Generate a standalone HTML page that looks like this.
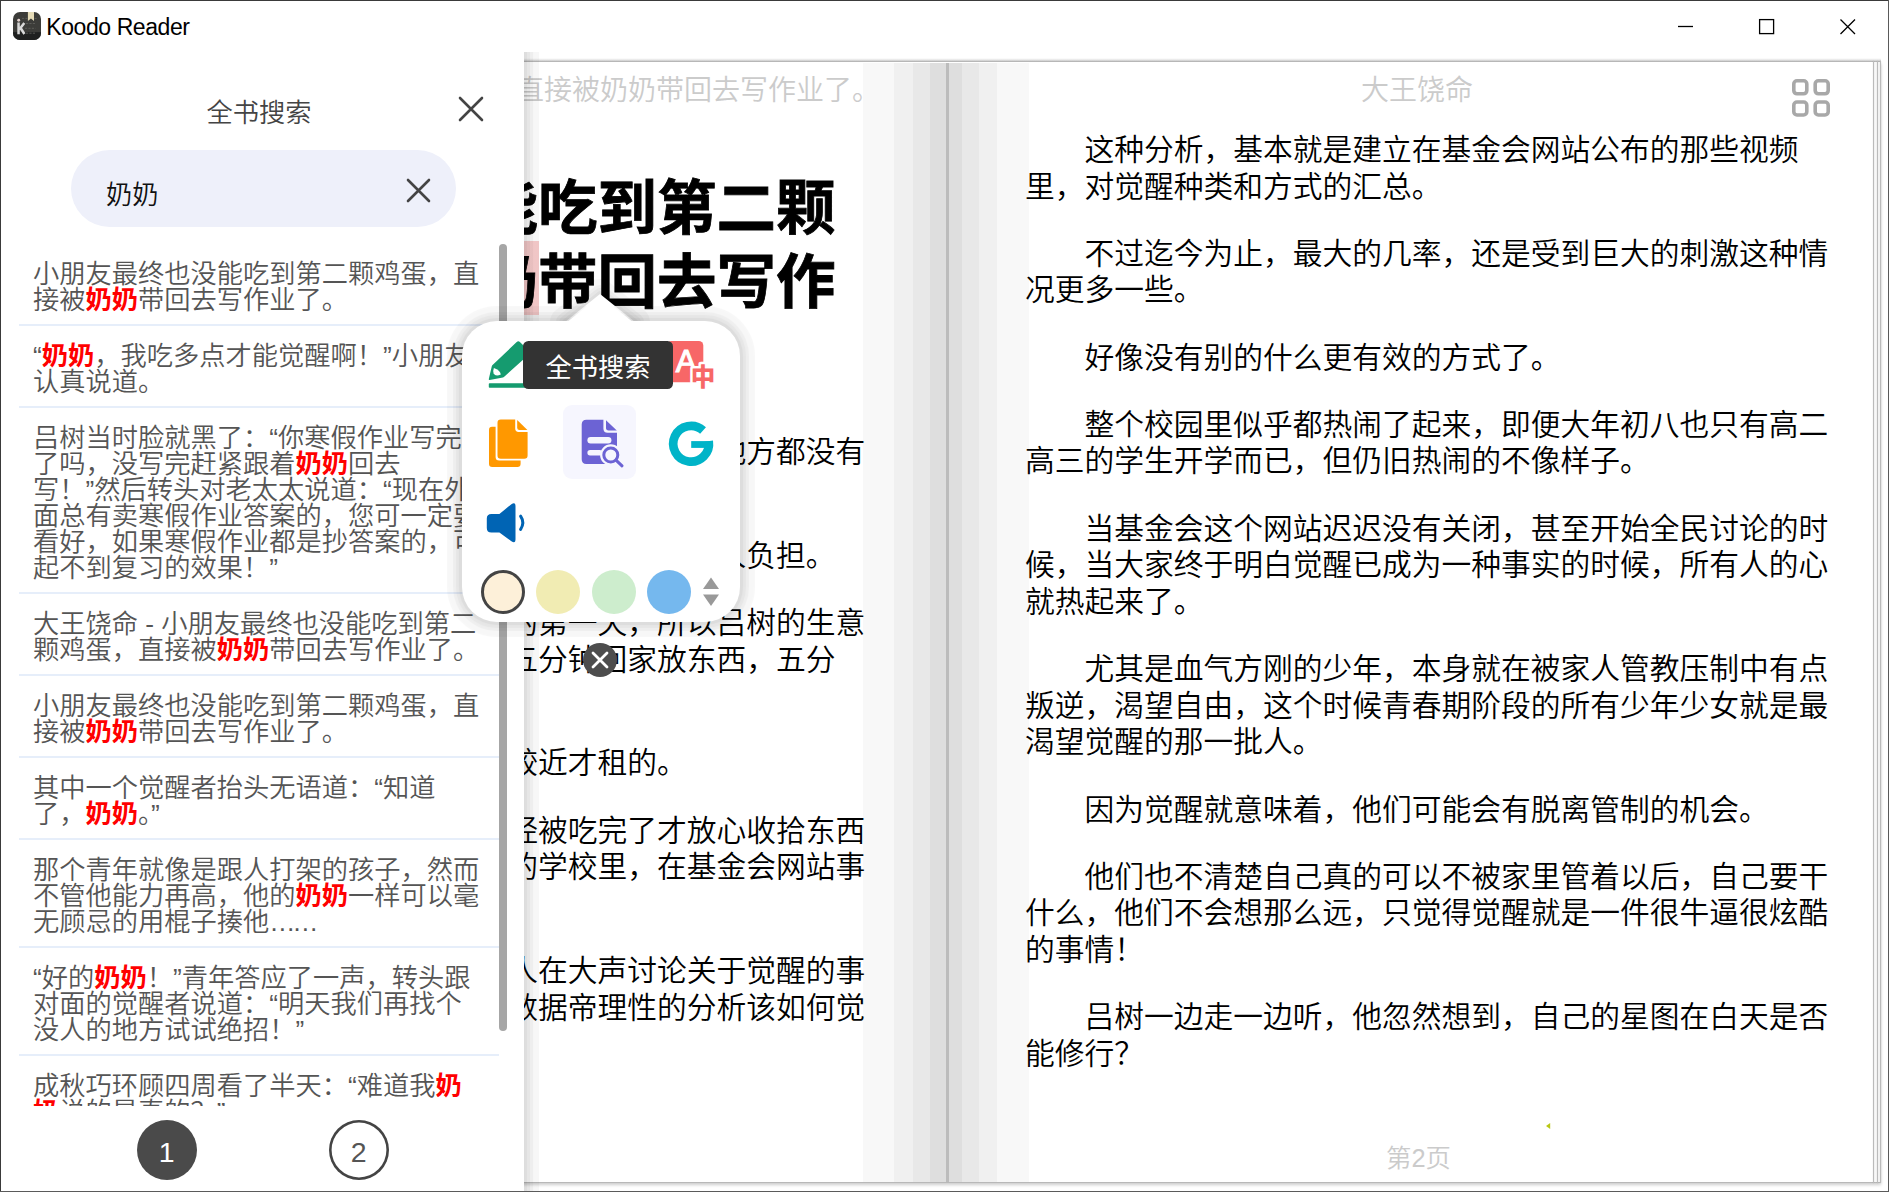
<!DOCTYPE html>
<html lang="zh-CN">
<head>
<meta charset="utf-8">
<title>Koodo Reader</title>
<style>
*{box-sizing:border-box;margin:0;padding:0}
html,body{width:1889px;height:1192px;overflow:hidden;background:#fff}
body{position:relative;font-family:"Liberation Sans","Noto Sans CJK SC",sans-serif;font-weight:350;color:#000}
.abs{position:absolute}
/* window frame */
#bt{left:0;top:0;width:1889px;height:1px;background:#3a3a3a}
#bl{left:0;top:0;width:1px;height:1192px;background:#3a3a3a}
#br{left:1888px;top:0;width:1px;height:1192px;background:#5a5a5a}
#bb{left:0;top:1191px;width:1889px;height:1px;background:#5a5a5a}
#apptitle{left:46.3px;top:13.5px;font-size:23px;letter-spacing:-.42px;line-height:26px;color:#000;white-space:nowrap}
#content{left:1px;top:52px;width:1887px;height:1139px;overflow:hidden}
#inner{left:-1px;top:-52px;width:1889px;height:1192px}
/* book */
#book{left:40px;top:62px;width:1841px;height:1121px;background:#fff;border-bottom:1px solid #b8b8b8;box-shadow:0 2px 3px rgba(0,0,0,.2)}
#booktop{left:40px;top:58px;width:1841px;height:4px;background:linear-gradient(180deg,rgba(0,0,0,0) 0,rgba(0,0,0,.05) 30%,rgba(0,0,0,.16) 62%,rgba(0,0,0,.28) 85%,rgba(0,0,0,.28) 100%)}
#gutter{left:863px;top:63px;width:166px;height:1119px;background:linear-gradient(90deg,#f8f8f8 0,#f8f8f8 31px,#f0f0f0 31px,#f0f0f0 50px,#e8e8e8 50px,#e8e8e8 67px,#dedede 67px,#dedede 83px,#bcbcbc 83px,#bcbcbc 86px,#dedede 86px,#dedede 99px,#e8e8e8 99px,#e8e8e8 116px,#f0f0f0 116px,#f0f0f0 134px,#f8f8f8 134px,#f8f8f8 166px)}
.edge{top:61px;width:1px;height:1122px;background:#bbb;box-shadow:0 0 1px rgba(0,0,0,.25)}
.pg{font-size:29.75px;line-height:36.6px;color:#000;white-space:nowrap}
.pg p{margin:0 0 30.65px 0;text-indent:2em}
.pg p i{font-style:normal;display:block;text-indent:0}
.hdr{font-size:28px;line-height:34px;color:#cbcbcb;white-space:nowrap}
#lpage{left:62px;top:434px;width:804px}
#rpage{left:1025px;top:132px;width:804px}
#lh1{left:62px;top:172px;font-size:59.5px;line-height:74.4px;font-weight:700;white-space:nowrap;color:#000}
#lh1 b{font-weight:700}
#lh1{-webkit-text-stroke:.8px #000}
#hlt{left:419px;top:241px;width:119.5px;height:74px;background:#f8cccc}
/* sidebar */
#side{left:1px;top:52px;width:523px;height:1139px;background:#fff}
#sideshadow{left:524px;top:52px;width:15.5px;height:1139px;background:linear-gradient(90deg,rgba(0,0,0,.135) 0,rgba(0,0,0,.13) 2.6px,rgba(0,0,0,.098) 3.2px,rgba(0,0,0,.098) 5.7px,rgba(0,0,0,.067) 6.3px,rgba(0,0,0,.067) 8.7px,rgba(0,0,0,.033) 9.6px,rgba(0,0,0,.031) 14.6px,rgba(0,0,0,0) 15.5px)}
#stitle{left:0;top:97.5px;width:518px;text-align:center;font-size:26.25px;line-height:30px;color:#444}
#sbox{left:71px;top:150px;width:385px;height:77px;border-radius:39px;background:#eef0fa}
#sbox span{position:absolute;left:35px;top:30px;font-size:26.25px;line-height:30px;color:#111}
#list{left:19px;top:244px;width:480px;height:862px;overflow:hidden;font-size:26.25px;line-height:26px;color:#555;white-space:nowrap}
#list .it{padding:16.5px 0 11.5px 14px;border-bottom:2px solid #e6eefa}
#list b{color:#f00;font-weight:700}
#sbar{left:499px;top:244px;width:8px;height:787px;border-radius:4px;background:#a6a6a6}
.pb{top:1119.5px;width:60.5px;height:60.5px;border-radius:50%;font-size:28.5px;line-height:65px;text-align:center}
#pb1{left:136.5px;background:#4a4a4a;color:#fff}
#pb2{left:328.5px;box-shadow:inset 0 0 0 2.6px #444;color:#555}
/* popup */
#pop{left:462px;top:321px;width:278px;height:301px;border-radius:35px;background:#fff;box-shadow:0 0 1px 3px rgba(0,0,0,.039),0 0 1px 6px rgba(0,0,0,.033),0 0 1px 9px rgba(0,0,0,.037),0 0 1px 15px rgba(0,0,0,.031)}
#tip{left:522.6px;top:341px;width:150.6px;height:47.6px;border-radius:5.5px;background:#333;color:#fff;font-size:26.25px;font-weight:400;line-height:54px;overflow:hidden;text-align:center}
#hl{left:563px;top:405px;width:73px;height:74px;border-radius:9px;background:#f6f6fe}
.cc{top:569.5px;width:44px;height:44px;border-radius:50%}
#xc{left:583px;top:643px;width:34px;height:34px;border-radius:50%;background:#4d4d4d}
</style>
</head>
<body>
<div id="content" class="abs"><div id="inner" class="abs">
<!-- BOOK -->
<div id="book" class="abs"></div><div id="booktop" class="abs"></div>
<div id="gutter" class="abs"></div>
<div class="abs" style="left:1874px;top:62px;width:6px;height:1120px;background:#f8f8f8"></div>
<div class="abs edge" style="left:1873px"></div>
<div class="abs edge" style="left:1877px"></div>
<div class="abs edge" style="left:1880px"></div>

<!-- LEFT PAGE -->
<div class="abs hdr" style="right:1009px;top:73.5px">小朋友最终也没能吃到第二颗鸡蛋，直接被奶奶带回去写作业了。</div>
<div id="hlt" class="abs"></div>
<div id="lh1" class="abs">小朋友最终也没能吃到第二颗<br>鸡蛋，直接被<b>奶奶</b>带回去写作<br>业了。</div>
<div id="lpage" class="abs pg">
<p>这一带都是老旧的家属院，连个像样能摆摊的地方都没有<i>城管来管。</i></p>
<p>他早就习惯凡事靠自己，从来都不愿意成为别人负担。</p>
<p>今天是洛城外国语学校刚开学的第一天，所以吕树的生意<i>格外的好，不到七点就卖完了，十五分钟回家放东西，五分</i><i>钟，就能走到学校。</i></p>
<p>当初这房子就是因为离学校比较近才租的。</p>
<p>吕树看着吕小鱼碗里的早饭已经被吃完了才放心收拾东西<i>去上学。如今不管是初中还是高中的学校里，在基金会网站事</i><i>件之后都变得不太平静了。</i></p>
<p>一路上吕树都能听到身边有行人在大声讨论关于觉醒的事<i>情，甚至已经有人开始自称是所谓数据帝理性的分析该如何觉</i><i>醒。</i></p>
</div>

<!-- RIGHT PAGE -->
<div class="abs hdr" style="left:1361px;top:73.5px">大王饶命</div>
<div id="rpage" class="abs pg">
<p>这种分析，基本就是建立在基金会网站公布的那些视频<i>里，对觉醒种类和方式的汇总。</i></p>
<p>不过迄今为止，最大的几率，还是受到巨大的刺激这种情<i>况更多一些。</i></p>
<p>好像没有别的什么更有效的方式了。</p>
<p>整个校园里似乎都热闹了起来，即便大年初八也只有高二<i>高三的学生开学而已，但仍旧热闹的不像样子。</i></p>
<p>当基金会这个网站迟迟没有关闭，甚至开始全民讨论的时<i>候，当大家终于明白觉醒已成为一种事实的时候，所有人的心</i><i>就热起来了。</i></p>
<p>尤其是血气方刚的少年，本身就在被家人管教压制中有点<i>叛逆，渴望自由，这个时候青春期阶段的所有少年少女就是最</i><i>渴望觉醒的那一批人。</i></p>
<p>因为觉醒就意味着，他们可能会有脱离管制的机会。</p>
<p>他们也不清楚自己真的可以不被家里管着以后，自己要干<i>什么，他们不会想那么远，只觉得觉醒就是一件很牛逼很炫酷</i><i>的事情！</i></p>
<p>吕树一边走一边听，他忽然想到，自己的星图在白天是否<i>能修行？</i></p>
</div>
<div class="abs hdr" style="left:1386px;top:1141.3px;font-size:25.4px">第2页</div>
<svg class="abs" style="left:1791px;top:78px" width="41" height="41" viewBox="0 0 41 41" fill="none" stroke="#a8a8a8" stroke-width="3.6"><rect x="2.8" y="2.8" width="13" height="13" rx="3.2"/><rect x="24.2" y="2.8" width="13" height="13" rx="3.2"/><rect x="2.8" y="24" width="13" height="13" rx="3.2"/><rect x="24.2" y="24" width="13" height="13" rx="3.2"/></svg>

<svg class="abs" style="left:1545px;top:1122px" width="7" height="8" viewBox="0 0 7 8"><path d="M1 4L5.2 1V7Z" fill="#b9c714"/></svg>
<!-- SIDEBAR -->
<div id="side" class="abs"></div><div id="sideshadow" class="abs"></div>
<div id="stitle" class="abs">全书搜索</div>
<svg class="abs" style="left:457px;top:95px" width="28" height="28" viewBox="0 0 28 28" stroke="#444" stroke-width="2.6" stroke-linecap="round"><path d="M3 3L25 25M25 3L3 25"/></svg>
<div id="sbox" class="abs"><span>奶奶</span></div>
<svg class="abs" style="left:404px;top:176px" width="28" height="28" viewBox="0 0 28 28" stroke="#444" stroke-width="2.6" stroke-linecap="round"><path d="M4 4L25 25M25 4L4 25"/></svg>
<div id="list" class="abs">
<div class="it">小朋友最终也没能吃到第二颗鸡蛋，直<br>接被<b>奶奶</b>带回去写作业了。</div>
<div class="it">“<b>奶奶</b>，我吃多点才能觉醒啊！”小朋友<br>认真说道。</div>
<div class="it">吕树当时脸就黑了：“你寒假作业写完<br>了吗，没写完赶紧跟着<b>奶奶</b>回去<br>写！”然后转头对老太太说道：“现在外<br>面总有卖寒假作业答案的，您可一定要<br>看好，如果寒假作业都是抄答案的，可<br>起不到复习的效果！”</div>
<div class="it">大王饶命 - 小朋友最终也没能吃到第二<br>颗鸡蛋，直接被<b>奶奶</b>带回去写作业了。</div>
<div class="it">小朋友最终也没能吃到第二颗鸡蛋，直<br>接被<b>奶奶</b>带回去写作业了。</div>
<div class="it">其中一个觉醒者抬头无语道：“知道<br>了，<b>奶奶</b>。”</div>
<div class="it">那个青年就像是跟人打架的孩子，然而<br>不管他能力再高，他的<b>奶奶</b>一样可以毫<br>无顾忌的用棍子揍他<span style="letter-spacing:-3.2px">……</span></div>
<div class="it">“好的<b>奶奶</b>！”青年答应了一声，转头跟<br>对面的觉醒者说道：“明天我们再找个<br>没人的地方试试绝招！”</div>
<div class="it">成秋巧环顾四周看了半天：“难道我<b>奶</b><br><b>奶</b>说的是真的？”</div>
</div>
<div id="sbar" class="abs"></div>
<div id="pb1" class="abs pb">1</div>
<div id="pb2" class="abs pb">2</div>

<!-- POPUP -->
<svg class="abs" style="left:540px;top:270px;overflow:visible" width="120" height="60" viewBox="540 270 120 60"><g fill="none" stroke-linejoin="round"><path d="M565 322L600 294L635 322Z" stroke="rgba(0,0,0,.031)" stroke-width="30"/><path d="M565 322L600 294L635 322Z" stroke="rgba(0,0,0,.037)" stroke-width="18"/><path d="M565 322L600 294L635 322Z" stroke="rgba(0,0,0,.033)" stroke-width="12"/><path d="M565 322L600 294L635 322Z" stroke="rgba(0,0,0,.039)" stroke-width="6"/></g><path d="M565 322L600 294L635 322Z" fill="#fff"/></svg>
<div id="pop" class="abs"></div>
<svg class="abs" style="left:560px;top:300px" width="80" height="30" viewBox="560 300 80 30"><path d="M566 323L600 295.6L634 323Z" fill="#fff"/></svg>
<div id="hl" class="abs"></div>

<!-- popup icons -->
<svg class="abs" style="left:486px;top:338px" width="56" height="54" viewBox="486 338 56 54"><g fill="#159b6f"><path d="M489.6 379.9Q488.6 380.1 488.8 379L491.8 366.2Q491.9 365.7 492.3 365.3L516.7 342Q518.3 340.5 519.9 342L529.2 351Q530.8 352.6 529.2 354.2L503.9 377Q503.5 377.4 502.9 377.5Z"/><rect x="488.8" y="383.2" width="46" height="4.6" rx="0.8"/></g><path d="M493.9 368.1Q500.2 370.2 500.8 374.6Q495.2 377 493.6 373.2Q492.9 370.6 493.9 368.1Z" fill="#fff"/></svg>
<svg class="abs" style="left:660px;top:338px" width="60" height="54" viewBox="660 338 60 54"><rect x="667" y="341" width="36.3" height="41.2" rx="4.5" fill="#f76767"/><text x="686" y="372.3" font-family="Liberation Sans, sans-serif" font-size="31" font-weight="400" fill="#fff" stroke="#fff" stroke-width="1.1" text-anchor="middle">A</text><text x="703" y="385.6" font-family="Noto Sans CJK SC, sans-serif" font-weight="900" font-size="24.5" fill="#f76767" stroke="#fff" stroke-width="5" paint-order="stroke" stroke-linejoin="round" text-anchor="middle">中</text></svg>
<svg class="abs" style="left:486px;top:416px" width="46" height="54" viewBox="486 416 46 54"><g fill="#ff9800"><path d="M492 426.8H495.6V457Q495.6 460.6 499.2 460.6H520.6V463.8Q520.6 467 517.4 467H492.2Q489 467 489 463.8V430Q489 426.8 492 426.8Z"/><path d="M500.8 419.5H515.2V428.6Q515.2 432 518.6 432H527.6V455.4Q527.6 458.7 524.3 458.7H500.8Q497.5 458.7 497.5 455.4V422.8Q497.5 419.5 500.8 419.5Z"/><path d="M517.2 420L527.4 430H519.4Q517.2 430 517.2 427.8Z"/></g></svg>
<svg class="abs" style="left:578px;top:416px" width="48" height="54" viewBox="578 416 48 54"><g fill="#6c63d4"><path d="M586.4 419.8H603.4V428.6Q603.4 432.8 607.6 432.8H617V459.3Q617 464 612.3 464H586.4Q581.7 464 581.7 459.3V424.5Q581.7 419.8 586.4 419.8Z"/><path d="M606 420.2L616.8 430.4H608.6Q606 430.4 606 427.8Z"/></g><g fill="#f6f6fe"><rect x="587.4" y="437.1" width="24" height="6.5" rx="3.25"/><rect x="587.4" y="450" width="15" height="5.4" rx="2.7"/></g><circle cx="610.8" cy="455" r="8" fill="#f6f6fe" stroke="#f6f6fe" stroke-width="5.4"/><path d="M616.6 460.6L622 465.8" stroke="#f6f6fe" stroke-width="6.6" stroke-linecap="round"/><circle cx="610.8" cy="455" r="7" fill="#f6f6fe" stroke="#6c63d4" stroke-width="3"/><path d="M616 460.2L622 465.8" stroke="#6c63d4" stroke-width="3.1" stroke-linecap="round"/></svg>
<svg class="abs" style="left:664px;top:416px" width="54" height="54" viewBox="664 416 54 54"><path d="M703.04 430.58A17.85 17.85 0 1 0 708.73 441.2" fill="none" stroke="#00b4c8" stroke-width="8.7"/><rect x="691.2" y="441.1" width="21.6" height="6.8" fill="#00b4c8"/></svg>
<svg class="abs" style="left:483px;top:498px" width="46" height="50" viewBox="483 498 46 50"><path d="M491.4 514H499.4L511.4 504.2Q515.5 501.4 515.5 506.2V539.2Q515.5 544 511.4 541.2L499.4 532.6H491.4Q486.8 532.6 486.8 528V518.6Q486.8 514 491.4 514Z" fill="#0064b4"/><path d="M520.6 516.2Q525 522.7 520.6 529.4" fill="none" stroke="#0064b4" stroke-width="3" stroke-linecap="round"/></svg>
<div id="tip" class="abs">全书搜索</div>
<div class="abs cc" style="left:481px;background:#fdf0d9;border:3.5px solid #444"></div>
<div class="abs cc" style="left:536px;background:#f1ecb3"></div>
<div class="abs cc" style="left:591.5px;background:#cdedcd"></div>
<div class="abs cc" style="left:647px;background:#75b8ee"></div>
<svg class="abs" style="left:702px;top:576px" width="18" height="32" viewBox="0 0 18 32" fill="#999"><path d="M9 1.5L17 13H1Z"/><path d="M1 18.5H17L9 30Z"/></svg>
<div id="xc" class="abs"></div>
<svg class="abs" style="left:583px;top:643px" width="34" height="34" viewBox="0 0 34 34" stroke="#fff" stroke-width="2.8" stroke-linecap="round"><path d="M10 10L24 24M24 10L10 24"/></svg>

</div></div>
<!-- TITLE BAR -->
<svg class="abs" style="left:12px;top:11px" width="31" height="31" viewBox="12 11 31 31"><defs><clipPath id="ac"><rect x="13" y="12" width="28" height="28" rx="7"/></clipPath></defs><g clip-path="url(#ac)"><rect x="13" y="12" width="28" height="28" fill="#3c3c39"/><rect x="13" y="32.2" width="28" height="8" fill="#1f2020"/><path d="M27.9 12H34V21L30.95 18.6L27.9 21Z" fill="#e6dcb8"/><g stroke="#5e5e5a" stroke-width="0.9" stroke-dasharray="2.2 1.2"><path d="M22 18.4H27.5M34.5 18.4H37M26 23.5H35.5M25 28.3H35.5M26 33.2H35.5"/></g><circle cx="18.7" cy="20.3" r="1.45" fill="#e6d4d0"/><path d="M18.55 22.6V34.2M19.3 29.4L24.3 23M20.6 28L24.4 34" stroke="#d9d9d9" stroke-width="2.5" fill="none"/></g></svg>
<div id="apptitle" class="abs">Koodo Reader</div>
<svg class="abs" style="left:1677px;top:18px" width="180" height="18" viewBox="0 0 180 18" fill="none" stroke="#000" stroke-width="1.3"><path d="M1 8.5H16"/><rect x="82.6" y="1.6" width="14" height="14"/><path d="M163.5 1.5L178 16M178 1.5L163.5 16"/></svg>
<div id="bt" class="abs"></div><div id="bl" class="abs"></div><div id="br" class="abs"></div><div id="bb" class="abs"></div>
</body>
</html>
